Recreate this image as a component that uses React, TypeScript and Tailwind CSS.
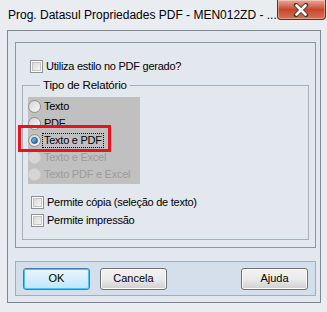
import React from "react";

const font = { fontFamily: '"Liberation Sans", Arial, sans-serif' };

function Check({ label }: { label: string }) {
  return (
    <div className="flex items-center h-[18px]">
      <div className="w-[13px] h-[13px] border border-[#8e8f8f] bg-white p-[1px] shrink-0">
        <div className="w-full h-full bg-gradient-to-br from-[#d9d9d9] to-[#f5f5f5] border border-[#c4c4c4]" />
      </div>
      <span className="ml-[3px] text-[11px] tracking-[-0.25px] text-black leading-none">{label}</span>
    </div>
  );
}

function Radio({ label, checked, disabled, focus }: { label: string; checked?: boolean; disabled?: boolean; focus?: boolean }) {
  return (
    <div className="flex items-center h-[17px]">
      <div
        className={
          "w-[13px] h-[13px] rounded-full border shrink-0 flex items-center justify-center " +
          (disabled
            ? "border-[#cdcdcd] bg-[#d6d6d6]"
            : "border-[#8e8f8f] bg-gradient-to-br from-[#d4d4d4] to-[#f8f8f8]")
        }
      >
        {checked && (
          <div className="w-[7px] h-[7px] rounded-full bg-gradient-to-br from-[#8fd3ff] to-[#0b5d9c] border border-[#1a4f7f]" />
        )}
      </div>
      <span
        className={
          "ml-[2px] px-[1px] text-[11px] tracking-[-0.25px] leading-[13px] " +
          (disabled ? "text-[#9c9c9c]" : "text-black") +
          (focus ? " outline outline-1 outline-dotted outline-black" : "")
        }
      >
        {label}
      </span>
    </div>
  );
}

function Btn({ label, focused }: { label: string; focused?: boolean }) {
  return (
    <div
      className={
        "w-[67px] h-[22px] rounded-[3px] border flex items-center justify-center text-[11px] text-black " +
        (focused
          ? "border-[#3c7fb1] bg-gradient-to-b from-[#eaf6fd] to-[#bee6fd] shadow-[inset_0_0_0_1px_#48c7f3]"
          : "border-[#707070] bg-gradient-to-b from-[#f2f2f2] via-[#ebebeb] to-[#cfcfcf] shadow-[inset_0_0_0_1px_#fcfcfc]")
      }
    >
      {label}
    </div>
  );
}

export default function App() {
  return (
    <div className="w-[327px] h-[312px] bg-[#e9edf2] relative overflow-hidden" style={font}>
      <div className="h-[30px] flex justify-between">
        <div className="pl-[8px] pt-[7px] text-[12px] text-black leading-[16px] whitespace-nowrap">
          Prog. Datasul Propriedades PDF - MEN012ZD - ...
        </div>
        <div className="mr-[5px] w-[49px] h-[20px] shrink-0 rounded-b-[4px] border border-t-0 border-[#6b2a1f] bg-gradient-to-b from-[#e8a898] via-[#c7472c] to-[#d87256] flex items-center justify-center shadow-[inset_0_0_0_1px_rgba(255,255,255,0.35)]">
          <svg width="16" height="14" viewBox="0 0 16 14">
            <path
              d="M3 2 L13 12 M13 2 L3 12"
              stroke="#3b3b3b"
              strokeWidth="4.5"
              strokeLinecap="round"
              fill="none"
            />
            <path d="M3.5 2.5 L12.5 11.5 M12.5 2.5 L3.5 11.5" stroke="#ffffff" strokeWidth="2.6" strokeLinecap="round" fill="none" />
          </svg>
        </div>
      </div>
      <div className="ml-[7px] mr-[6px] h-[273px] border border-[#7d8795] bg-[#e3e7ee] pl-[7px] pr-[4px] pt-[11px]">
        <div className="h-[206px] border border-[#8c97a6] pt-[14px] pl-[14px] pr-[6px]">
          <Check label="Utiliza estilo no PDF gerado?" />
          <fieldset className="mt-[3px] ml-[-8px] h-[162px] border border-[#a6b0bc] pl-[5px] relative">
            <legend className="ml-[12px] px-[3px] text-[11.5px] tracking-[-0.2px] leading-[14px] text-black">Tipo de Relatório</legend>
            <div className="w-[112px] bg-[#c0c0c0] mt-[5px] pt-[1px] pb-[1px]">
              <Radio label="Texto" />
              <Radio label="PDF" />
              <Radio label="Texto e PDF" checked focus />
              <Radio label="Texto e Excel" disabled />
              <Radio label="Texto PDF e Excel" disabled />
            </div>
            <div className="absolute left-[-5px] top-[33px] w-[93px] h-[27px] border-[3px] border-[#e8131b]" />
            <div className="mt-[9px] pl-[3px]">
              <Check label="Permite cópia (seleção de texto)" />
              <Check label="Permite impressão" />
            </div>
          </fieldset>
        </div>
        <div className="mt-[13px] h-[35px] border border-[#a2adbb] bg-[#d5deeb] flex items-center px-[7px]">
          <Btn label="OK" focused />
          <div className="w-[10px]" />
          <Btn label="Cancela" />
          <div className="flex-1" />
          <Btn label="Ajuda" />
        </div>
      </div>
    </div>
  );
}
